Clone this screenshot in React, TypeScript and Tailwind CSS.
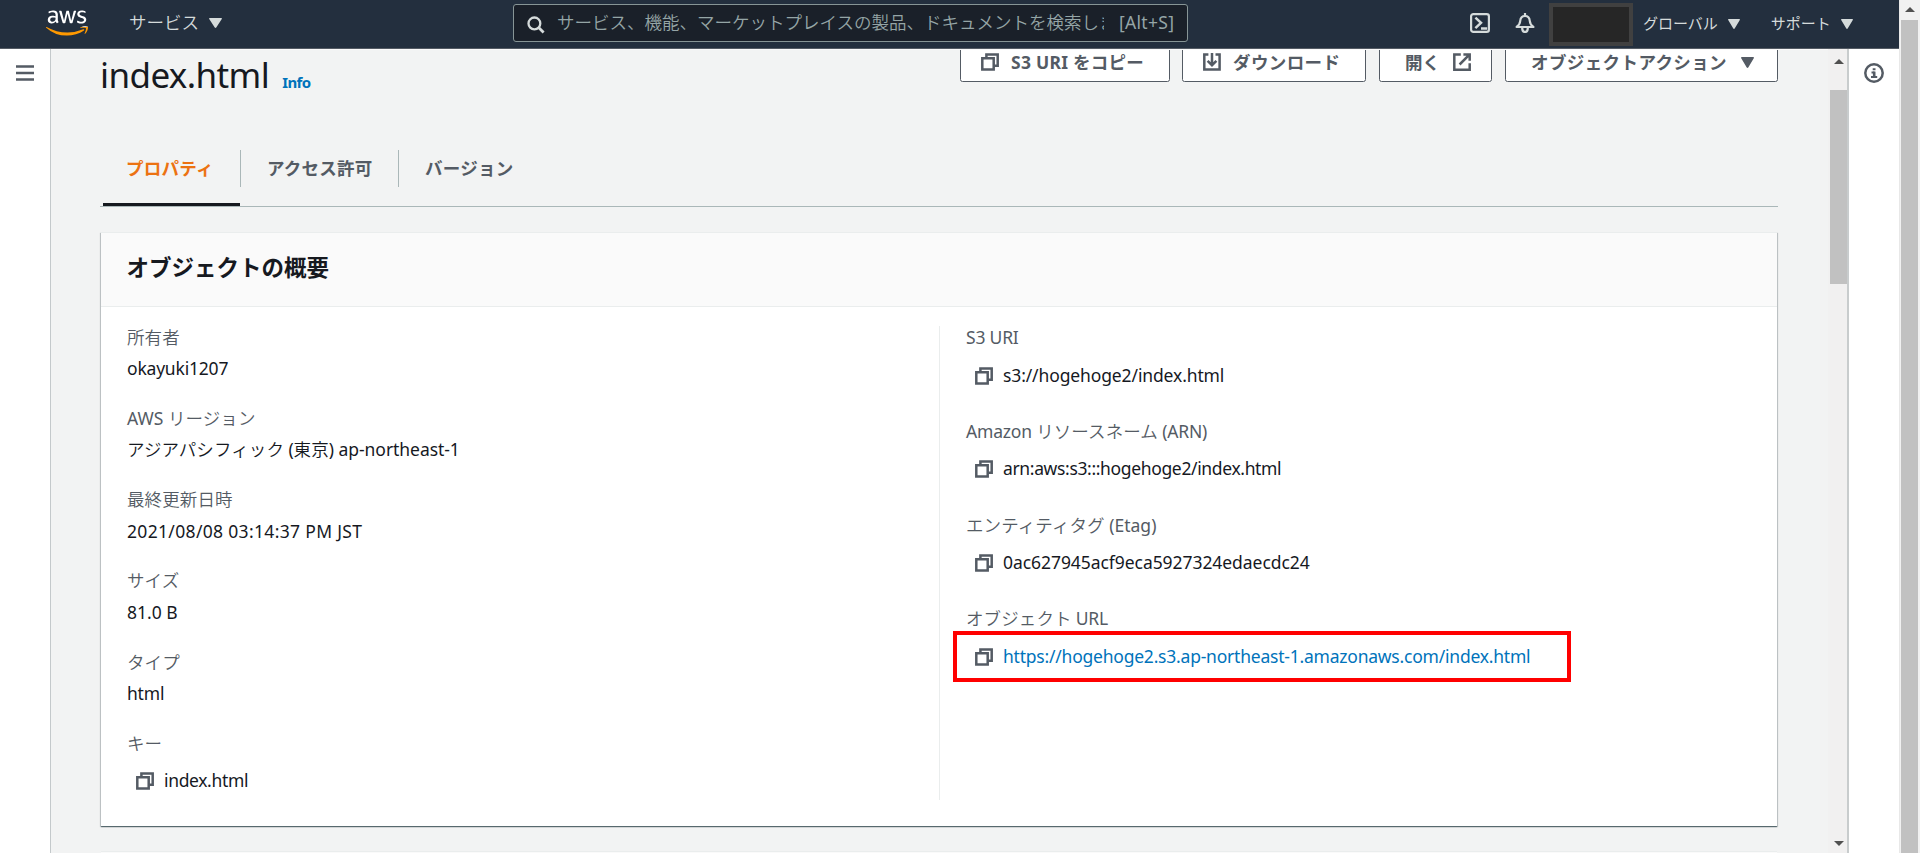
import type { ReactNode } from "react";
import { FaAws } from "react-icons/fa";

function Caret({ className }: { className: string }) {
  return (
    <svg viewBox="0 0 12 10" preserveAspectRatio="none" className={className} fill="currentColor">
      <path d="M0.8 0h10.4c.7 0 1 .6.6 1.1L6.7 9.5c-.4.6-1 .6-1.4 0L.2 1.1C-.2.6.1 0 .8 0z" />
    </svg>
  );
}

function CopyIcon({ className = "" }: { className?: string }) {
  return (
    <svg viewBox="0 0 18 18" className={`h-[18px] w-[18px] shrink-0 text-[#545b64] ${className}`} fill="none" stroke="currentColor" strokeWidth="2.5">
      <path d="M1.3 5.2h11.4v11.4H1.3z" />
      <path d="M5.4 5V1.4h11.3v11.3H13" />
    </svg>
  );
}

function DownloadIcon() {
  return (
    <svg viewBox="0 0 18 18" className="h-[18px] w-[18px] shrink-0" fill="none" stroke="currentColor" strokeWidth="2.5">
      <path d="M5.4 1.6H1.3v15h15.3v-15h-4.1" />
      <path d="M9 0v12.2M4.6 7.8L9 12.2l4.4-4.4" />
    </svg>
  );
}

function ExternalIcon() {
  return (
    <svg viewBox="0 0 18 18" className="h-[18px] w-[18px] shrink-0" fill="none" stroke="currentColor" strokeWidth="2.5">
      <path d="M7.8 1.4H1.3v15.3h15.4v-6.4" />
      <path d="M10.4 1.4h6.3v6.4M16.4 1.7L6.6 11.5" />
    </svg>
  );
}

function Jp({ children }: { children: ReactNode }) {
  return <span className="font-[350] tracking-[0.1px]">{children}</span>;
}

function Field({ label, children, className }: { label: ReactNode; children: ReactNode; className: string }) {
  return (
    <div className={className}>
      <div className="h-[27.5px] leading-[27.5px] text-[#545b64]">{label}</div>
      {children}
    </div>
  );
}

function PlainField({ label, children, tracking = "" }: { label: ReactNode; children: ReactNode; tracking?: string }) {
  return (
    <Field label={label} className="h-[81.25px]">
      <div className={`mt-[4px] h-[27.5px] leading-[27.5px] ${tracking}`}>{children}</div>
    </Field>
  );
}

function CopyField({ label, children, className }: { label: ReactNode; children: ReactNode; className: string }) {
  return (
    <Field label={label} className={className}>
      <div className="mt-[9px] flex h-[28px] items-center pl-[9px]">
        <CopyIcon className="mt-[2px]" />
        <span className="ml-[10px] leading-[28px] whitespace-nowrap">{children}</span>
      </div>
    </Field>
  );
}

function ActionButton({ children, className }: { children: ReactNode; className: string }) {
  return (
    <div className={`flex h-[40px] items-center rounded-[2.5px] border border-[#545b64] bg-white font-bold whitespace-nowrap text-[#545b64] ${className}`}>
      {children}
    </div>
  );
}

function TopBar() {
  return (
    <header className="flex h-[49px] shrink-0 items-center border-b border-[#545b64] bg-[#232f3e] text-[#d5dbdb]">
      <svg width="0" height="0" className="absolute">
        <linearGradient id="logo" gradientUnits="userSpaceOnUse" x1="0" y1="0" x2="0" y2="512">
          <stop offset="0.605" stopColor="#ffffff" />
          <stop offset="0.605" stopColor="#ff9900" />
        </linearGradient>
      </svg>
      <FaAws fill="url(#logo)" stroke="none" className="-mt-[2px] ml-[46px] h-[34px] w-[42px]" />
      <span className="-mt-[3px] ml-[41px] font-[350]">サービス</span>
      <Caret className="-mt-[2px] ml-[10px] h-[10px] w-[13px]" />
      <div className="-mt-[2px] ml-[291px] flex h-[38px] w-[675px] items-center rounded-[3px] border border-[#879596] bg-[#1a2029]">
        <svg viewBox="0 0 18 18" className="mt-[4px] ml-[13px] h-[18px] w-[18px]" fill="none" stroke="#d5dbdb">
          <circle cx="7.4" cy="7.4" r="5.9" strokeWidth="2.3" />
          <path d="M11.6 11.6l5 5" strokeWidth="2.8" />
        </svg>
        <span className="-mt-[2px] ml-[12px] w-[547px] overflow-hidden font-[350] whitespace-nowrap text-[#95a5a6]">
          サービス、機能、マーケットプレイスの製品、ドキュメントを検索しま
        </span>
        <span className="-mt-[2px] ml-[15px] tracking-[0.3px] whitespace-nowrap text-[#95a5a6]">[Alt+S]</span>
      </div>
      <svg viewBox="0 0 20 20" className="-mt-[2px] ml-[282px] h-[20px] w-[20px]" fill="none" stroke="currentColor" strokeWidth="2.2">
        <rect x="1.1" y="1.1" width="17.8" height="17.8" rx="2.2" />
        <path d="M5.4 4.6l5.6 5.2-5.6 5.4M11 15.4h6.2" strokeWidth="2.5" />
      </svg>
      <svg viewBox="0 0 20 20" className="-mt-[2px] ml-[25px] h-[20px] w-[20px]" fill="none" stroke="currentColor" strokeWidth="2.2">
        <path d="M1.6 14c2-1.4 3.4-3 3.6-6 .3-3.2 2-5 4.8-5s4.5 1.8 4.8 5c.2 3 1.6 4.6 3.6 6z" strokeLinejoin="round" />
        <path d="M10 0v3" />
        <path d="M7.2 15c0 2.6 1.2 4 2.8 4s2.8-1.4 2.8-4" />
      </svg>
      <div className="ml-[14px] h-[43px] w-[84px] border-4 border-[#404040] bg-[#262626]" />
      <span className="-mt-[2px] ml-[10px] text-[15px] font-normal">グローバル</span>
      <Caret className="-mt-[1px] ml-[10px] h-[10px] w-[12px]" />
      <span className="-mt-[2px] ml-[31px] text-[15px] font-normal">サポート</span>
      <Caret className="-mt-[1px] ml-[10px] h-[10px] w-[12px]" />
    </header>
  );
}

function Tabs() {
  return (
    <nav className="mt-[6px] flex h-[72px] border-b border-[#aab7b8] font-bold tracking-[0.25px] text-[#545b64]">
      <div className="ml-[3px] w-[137px] border-b-[3px] border-[#16191f] pt-[15px]">
        <div className="flex h-[37px] items-center pl-[23px] text-[#ec7211]">プロパティ</div>
      </div>
      <div className="mt-[15px] flex h-[37px] w-[158px] items-center border-l border-[#aab7b8] pl-[26px]">アクセス許可</div>
      <div className="mt-[15px] flex h-[37px] items-center border-l border-[#aab7b8] pl-[26px]">バージョン</div>
    </nav>
  );
}

function Overview() {
  return (
    <section className="mx-[1px] mt-[25px] h-[594px] border-t border-[#eaeded] bg-white shadow-[0_1px_1px_0_rgba(0,28,36,0.5),1px_1px_1px_0_rgba(0,28,36,0.15),-1px_1px_1px_0_rgba(0,28,36,0.15)]">
      <div className="flex h-[74px] items-center border-b border-[#eaeded] bg-[#fafafa] pl-[25.5px] text-[22.5px] font-bold">
        <span className="-mt-[3px]">オブジェクトの概要</span>
      </div>
      <div className="flex pt-[19px]">
        <div className="h-[474px] w-[839px] border-r border-[#eaeded] pl-[26px]">
          <div className="-mt-[2.5px]">
            <PlainField label={<Jp>所有者</Jp>} tracking="tracking-[-0.2px]">okayuki1207</PlainField>
            <PlainField label={<>AWS <Jp>リージョン</Jp></>}>
              <Jp>アジアパシフィック</Jp>
              <span className="tracking-[-0.1px]"> (</span>
              <Jp>東京</Jp>
              <span className="tracking-[-0.05px]">) ap-northeast-1</span>
            </PlainField>
            <PlainField label={<Jp>最終更新日時</Jp>} tracking="tracking-[0.33px]">2021/08/08 03:14:37 PM JST</PlainField>
            <PlainField label={<Jp>サイズ</Jp>}>81.0 B</PlainField>
            <PlainField label={<Jp>タイプ</Jp>} tracking="tracking-[-0.2px]">html</PlainField>
            <CopyField label={<Jp>キー</Jp>} className="">
              <span className="tracking-[-0.35px]">index.html</span>
            </CopyField>
          </div>
        </div>
        <div className="flex-1 pl-[26px]">
          <div className="-mt-[2px]">
            <CopyField label={<span className="tracking-[-0.2px]">S3 URI</span>} className="h-[93.75px]">
              <span className="tracking-[-0.12px]">s3://hogehoge2/index.html</span>
            </CopyField>
            <CopyField label={<span className="tracking-[-0.2px]">Amazon <Jp>リソースネーム</Jp> (ARN)</span>} className="h-[93.75px]">
              <span className="tracking-[-0.35px]">arn:aws:s3:::hogehoge2/index.html</span>
            </CopyField>
            <CopyField label={<><Jp>エンティティタグ</Jp><span> (Etag)</span></>} className="h-[93.75px]">
              <span className="tracking-[-0.06px]">0ac627945acf9eca5927324edaecdc24</span>
            </CopyField>
            <div className="relative">
              <CopyField label={<><Jp>オブジェクト</Jp><span className="tracking-[-0.3px]"> URL</span></>} className="h-[93.75px]">
                <span className="tracking-[-0.22px] text-[#0073bb]">https://hogehoge2.s3.ap-northeast-1.amazonaws.com/index.html</span>
              </CopyField>
              <div className="absolute top-[26px] left-[-13px] h-[51px] w-[618px] border-4 border-[#ff0000]" />
            </div>
          </div>
        </div>
      </div>
    </section>
  );
}

export default function App() {
  return (
    <div className="flex h-[853px] w-[1920px] overflow-hidden bg-white font-['Noto_Sans','Noto_Sans_CJK_JP',sans-serif] text-[17.5px] text-[#16191f]">
      <div className="flex w-[1899px] flex-col">
        <TopBar />
        <div className="flex min-h-0 flex-1">
          <aside className="w-[51px] border-r border-[#c4c9cb] pt-[16px] pl-[16px]">
            <svg viewBox="0 0 18 16" className="h-[16px] w-[18px]" stroke="#545b64" strokeWidth="2.5">
              <path d="M0 1.5h18M0 8h18M0 14.5h18" />
            </svg>
          </aside>
          <main className="h-full flex-1 overflow-hidden border-t border-[#fafafa] bg-[#f2f3f3] pl-[49px]">
            <div className="w-[1678px]">
              <div className="-mt-[8px] flex h-[87px] justify-between">
                <div className="flex items-baseline pt-[10px]">
                  <h1 className="text-[35px] leading-[45px] tracking-[-0.6px]">index.html</h1>
                  <a className="ml-[13px] text-[15px] font-bold tracking-[-0.6px] text-[#0073bb]">Info</a>
                </div>
                <div className="flex">
                  <ActionButton className="w-[210px] pl-[20px]">
                    <CopyIcon />
                    <span className="ml-[12px] tracking-[0.25px]">S3 URI をコピー</span>
                  </ActionButton>
                  <ActionButton className="ml-[12px] w-[184px] pl-[20px]">
                    <DownloadIcon />
                    <span className="ml-[12px] tracking-[0.4px]">ダウンロード</span>
                  </ActionButton>
                  <ActionButton className="ml-[13px] w-[113px] pl-[25px]">
                    <span>開く</span>
                    <span className="ml-[13px]"><ExternalIcon /></span>
                  </ActionButton>
                  <ActionButton className="ml-[13px] w-[273px] pl-[25px]">
                    <span className="tracking-[0.4px]">オブジェクトアクション</span>
                    <Caret className="ml-[14px] h-[11px] w-[13px]" />
                  </ActionButton>
                </div>
              </div>
              <Tabs />
              <Overview />
              <div className="mx-[1px] mt-[25px] h-[40px] border-t border-[#eaeded] bg-[#fafafa]" />
            </div>
          </main>
          <div className="flex w-[19px] flex-col items-center border-l-2 border-[#f1f1f1] bg-[#f1f0f0] pt-[10px] text-[#505050]">
            <svg viewBox="0 0 10 5" className="h-[5px] w-[10px]" fill="currentColor"><path d="M0 5L5 0l5 5z" /></svg>
            <div className="mt-[26px] h-[194px] w-[17px] bg-[#c1c1c1]" />
            <svg viewBox="0 0 10 5" className="mt-auto mb-[7px] h-[5px] w-[10px]" fill="currentColor"><path d="M0 0h10L5 5z" /></svg>
          </div>
          <aside className="w-[52px] border-l-2 border-[#c8cccd] pt-[14px] pl-[15px]">
            <svg viewBox="0 0 20 20" className="h-[20px] w-[20px]" fill="none" stroke="#545b64">
              <circle cx="10" cy="10" r="8.7" strokeWidth="2.5" />
              <path d="M8.7 6.2h2.8M7.5 9.5h3M7 14h6.2" strokeWidth="2" />
              <path d="M10.2 8.6v5.8" strokeWidth="2.6" />
            </svg>
          </aside>
        </div>
      </div>
      <div className="flex flex-1 flex-col border-l border-[#e8e8e8] bg-[#f1f1f1] pl-[1px] text-[#505050]">
        <svg viewBox="0 0 10 5" className="mt-[7px] ml-[3.5px] h-[5px] w-[10px]" fill="currentColor"><path d="M0 5L5 0l5 5z" /></svg>
        <div className="mt-[8px] w-[17px] flex-1 bg-[#c1c1c1]" />
      </div>
    </div>
  );
}
